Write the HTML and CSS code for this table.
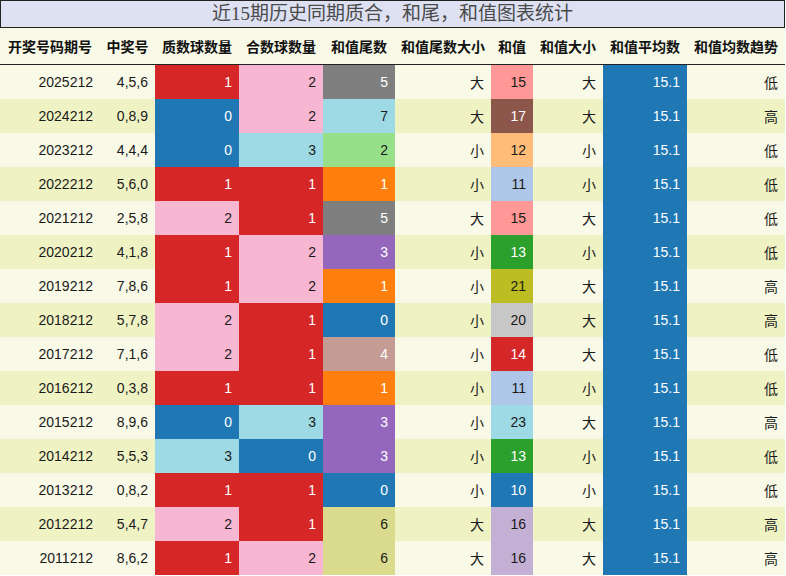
FILE: index.html
```html
<!DOCTYPE html>
<html>
<head>
<meta charset="utf-8">
<link rel="stylesheet" href="styles.css">
</head>
<body>
<div class="page">
  <div class="title">近15期历史同期质合，和尾，和值图表统计</div>
  <table class="grid">
    <colgroup>
      <col class="c1"><col class="c2"><col class="c3"><col class="c4"><col class="c5">
      <col class="c6"><col class="c7"><col class="c8"><col class="c9"><col class="c10">
    </colgroup>
    <thead>
      <tr>
        <th>开奖号码期号</th><th>中奖号</th><th>质数球数量</th><th>合数球数量</th><th>和值尾数</th>
        <th>和值尾数大小</th><th>和值</th><th>和值大小</th><th>和值平均数</th><th>和值均数趋势</th>
      </tr>
    </thead>
    <tbody>
      <tr><td>2025212</td><td>4,5,6</td><td class="red">1</td><td class="pink">2</td><td class="gray">5</td><td>大</td><td class="salmon">15</td><td>大</td><td class="blue">15.1</td><td>低</td></tr>
      <tr><td>2024212</td><td>0,8,9</td><td class="blue">0</td><td class="pink">2</td><td class="cyan">7</td><td>大</td><td class="brown">17</td><td>大</td><td class="blue">15.1</td><td>高</td></tr>
      <tr><td>2023212</td><td>4,4,4</td><td class="blue">0</td><td class="cyan">3</td><td class="lgreen">2</td><td>小</td><td class="lorange">12</td><td>小</td><td class="blue">15.1</td><td>低</td></tr>
      <tr><td>2022212</td><td>5,6,0</td><td class="red">1</td><td class="red">1</td><td class="orange">1</td><td>小</td><td class="lblue">11</td><td>小</td><td class="blue">15.1</td><td>低</td></tr>
      <tr><td>2021212</td><td>2,5,8</td><td class="pink">2</td><td class="red">1</td><td class="gray">5</td><td>大</td><td class="salmon">15</td><td>大</td><td class="blue">15.1</td><td>低</td></tr>
      <tr><td>2020212</td><td>4,1,8</td><td class="red">1</td><td class="pink">2</td><td class="purple">3</td><td>小</td><td class="green">13</td><td>小</td><td class="blue">15.1</td><td>低</td></tr>
      <tr><td>2019212</td><td>7,8,6</td><td class="red">1</td><td class="pink">2</td><td class="orange">1</td><td>小</td><td class="olive">21</td><td>大</td><td class="blue">15.1</td><td>高</td></tr>
      <tr><td>2018212</td><td>5,7,8</td><td class="pink">2</td><td class="red">1</td><td class="blue">0</td><td>小</td><td class="lgray">20</td><td>大</td><td class="blue">15.1</td><td>高</td></tr>
      <tr><td>2017212</td><td>7,1,6</td><td class="pink">2</td><td class="red">1</td><td class="rosy">4</td><td>小</td><td class="red">14</td><td>大</td><td class="blue">15.1</td><td>低</td></tr>
      <tr><td>2016212</td><td>0,3,8</td><td class="red">1</td><td class="red">1</td><td class="orange">1</td><td>小</td><td class="lblue">11</td><td>小</td><td class="blue">15.1</td><td>低</td></tr>
      <tr><td>2015212</td><td>8,9,6</td><td class="blue">0</td><td class="cyan">3</td><td class="purple">3</td><td>小</td><td class="cyan">23</td><td>大</td><td class="blue">15.1</td><td>高</td></tr>
      <tr><td>2014212</td><td>5,5,3</td><td class="cyan">3</td><td class="blue">0</td><td class="purple">3</td><td>小</td><td class="green">13</td><td>小</td><td class="blue">15.1</td><td>低</td></tr>
      <tr><td>2013212</td><td>0,8,2</td><td class="red">1</td><td class="red">1</td><td class="blue">0</td><td>小</td><td class="blue">10</td><td>小</td><td class="blue">15.1</td><td>低</td></tr>
      <tr><td>2012212</td><td>5,4,7</td><td class="pink">2</td><td class="red">1</td><td class="khaki">6</td><td>大</td><td class="lavender">16</td><td>大</td><td class="blue">15.1</td><td>高</td></tr>
      <tr><td>2011212</td><td>8,6,2</td><td class="red">1</td><td class="pink">2</td><td class="khaki">6</td><td>大</td><td class="lavender">16</td><td>大</td><td class="blue">15.1</td><td>高</td></tr>
    </tbody>
  </table>
</div>
</body>
</html>
```
FILE: styles.css
```css
html, body {
  margin: 0;
  padding: 0;
  background: #ffffff;
}
.page {
  width: 785px;
  font-family: "Liberation Sans", "Noto Sans CJK SC", sans-serif;
  font-size: 14px;
  color: #1a1a1a;
}
.title {
  box-sizing: border-box;
  height: 28px;
  border: 1px solid #222;
  background: #dde1f2;
  color: #4a4a4a;
  text-align: center;
  font-family: "Liberation Serif", "Noto Sans CJK SC", serif;
  font-size: 19px;
  line-height: 26px;
}
.grid {
  width: 785px;
  table-layout: fixed;
  border-collapse: collapse;
  border-spacing: 0;
}
.c1 { width: 100px; }
.c2 { width: 55px; }
.c3 { width: 84px; }
.c4 { width: 84px; }
.c5 { width: 72px; }
.c6 { width: 96px; }
.c7 { width: 42px; }
.c8 { width: 70px; }
.c9 { width: 84px; }
.c10 { width: 98px; }
.grid th {
  height: 36px;
  padding: 0;
  background: #f8f9e6;
  font-weight: bold;
  font-size: 14px;
  text-align: center;
  color: #111;
  border-bottom: 1px solid #222;
  white-space: nowrap;
}
.grid td {
  height: 34px;
  padding: 0 7px 0 0;
  text-align: right;
  white-space: nowrap;
  color: #1a1a1a;
}
.grid tbody tr:nth-child(odd) td { background: #f8f9e6; }
.grid tbody tr:nth-child(even) td { background: #eff3c4; }
.grid tbody tr td.red { background: #d62728; color: #fff; }
.grid tbody tr td.blue { background: #1f77b4; color: #fff; }
.grid tbody tr td.pink { background: #f7b6d2; }
.grid tbody tr td.cyan { background: #9edae5; }
.grid tbody tr td.gray { background: #7f7f7f; color: #fff; }
.grid tbody tr td.lgreen { background: #98df8a; }
.grid tbody tr td.orange { background: #ff7f0e; color: #fff; }
.grid tbody tr td.purple { background: #9467bd; color: #fff; }
.grid tbody tr td.salmon { background: #ff9896; }
.grid tbody tr td.brown { background: #8c564b; color: #fff; }
.grid tbody tr td.lorange { background: #ffbb78; }
.grid tbody tr td.lblue { background: #aec7e8; }
.grid tbody tr td.green { background: #2ca02c; color: #fff; }
.grid tbody tr td.olive { background: #bcbd22; }
.grid tbody tr td.lgray { background: #c7c7c7; }
.grid tbody tr td.rosy { background: #c49c94; color: #fff; }
.grid tbody tr td.khaki { background: #dbdb8d; }
.grid tbody tr td.lavender { background: #c5b0d5; }
```
